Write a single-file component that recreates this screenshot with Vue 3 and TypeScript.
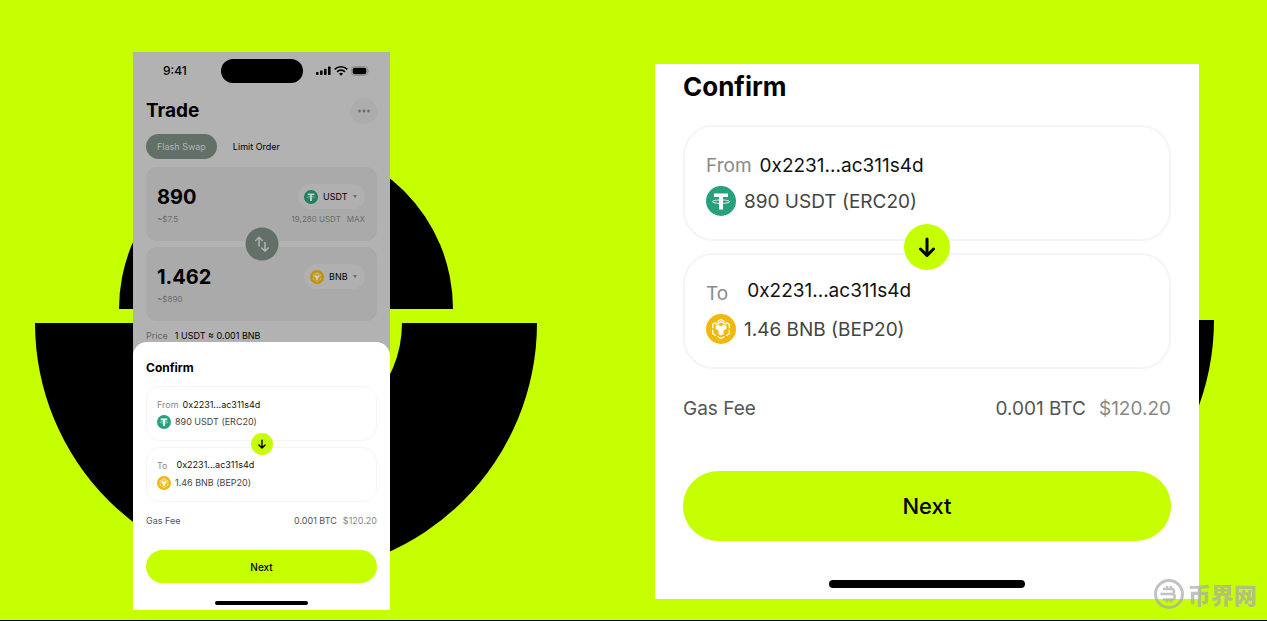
<script setup lang="ts">
import { ref } from 'vue'

interface Leg {
  label: string
  address: string
  token: 'usdt' | 'bnb'
  amount: string
}

const screens = ['phone', 'closeup'] as const

const legs: Leg[] = [
  { label: 'From', address: '0x2231...ac311s4d', token: 'usdt', amount: '890 USDT (ERC20)' },
  { label: 'To', address: '0x2231...ac311s4d', token: 'bnb', amount: '1.46 BNB (BEP20)' },
]

const tab = ref<'flash' | 'limit'>('flash')
const pay = ref('890')
const receive = ref('1.462')
</script>

<template>
  <main class="page">
    <svg class="symbols" aria-hidden="true">
      <defs>
        <symbol id="usdt" viewBox="0 0 30 30">
          <circle cx="15" cy="15" r="15" fill="#26a17b" />
          <path d="M8 7.500h14v3.500h-5v12.500h-4V11H8z" fill="#fff" />
          <path d="M13 14c-3.500.2-6.500.8-6.500 1.700s3.800 1.700 8.500 1.700 8.500-.8 8.500-1.700-3-1.500-6.500-1.700" fill="none" stroke="#fff" stroke-width=".9" />
        </symbol>
        <symbol id="bnb" viewBox="0 0 30 30">
          <circle cx="15" cy="15" r="15" fill="#f0b90b" />
          <g fill="none" stroke="#fff" stroke-width="1.300" stroke-linejoin="round">
            <path d="M11.500 7.500 15 5.500l3.500 2M20 8.300l3.300 1.900v4M23.300 15.800v4L20 21.700M18.500 22.500l-3.500 2-3.500-2M10 21.700l-3.300-1.900v-4M6.700 14.200v-4L10 8.300" />
            <path d="m9.500 10.300 5.500-2.500 5.500 2.500" />
          </g>
          <path d="m9.600 11.800 2.700-1.300L15 12.600l2.700-2.100 2.700 1.300v3l-2.900 2v3.400L15 21.600l-2.500-1.400v-3.400l-2.900-2z" fill="#fff" />
        </symbol>
      </defs>
    </svg>

    <section v-for="screen in screens" :key="screen" class="stage" :class="screen">
      <svg class="emblem" viewBox="0 0 502 432" aria-hidden="true">
        <path d="M84 167a167 167 0 0 1 334 0z" />
        <path d="M0 181a251 251 0 0 0 502 0H367a116 116 0 0 1-232 0z" />
      </svg>

      <div class="device">
        <div v-if="screen === 'phone'" class="trade">
          <div class="status">
            <span class="time">9:41</span>
            <span class="island"></span>
            <svg class="signals" viewBox="0 0 54 12" aria-hidden="true">
              <rect x="0" y="7" width="2.600" height="3" rx=".8" />
              <rect x="4" y="5.500" width="2.600" height="4.500" rx=".8" />
              <rect x="8" y="3.700" width="2.600" height="6.300" rx=".8" />
              <rect x="12" y="1.500" width="2.600" height="8.500" rx=".8" />
              <g fill="none" stroke="#000" stroke-width="1.700">
                <path d="M18.700 4.300a9 9 0 0 1 12.600 0" />
                <path d="M21.100 6.800a5.500 5.500 0 0 1 7.800 0" />
              </g>
              <path d="M23 8.700a3 3 0 0 1 4 0l-2 2z" />
              <rect x="35.500" y="1.500" width="16" height="9" rx="2.800" fill="none" stroke="#888" stroke-width=".8" />
              <rect x="36.700" y="2.700" width="13.600" height="6.600" rx="1.800" />
              <path d="M52.400 4.500c1.200.5 1.200 2.500 0 3z" fill="#888" />
            </svg>
          </div>

          <header class="heading">
            <h1>Trade</h1>
            <button type="button" class="more" aria-label="More">
              <svg viewBox="0 0 26 26" aria-hidden="true">
                <circle cx="8.500" cy="13" r="1.400" />
                <circle cx="13" cy="13" r="1.400" />
                <circle cx="17.500" cy="13" r="1.400" />
              </svg>
            </button>
          </header>

          <nav class="tabs">
            <button type="button" :class="{ active: tab === 'flash' }" @click="tab = 'flash'">Flash Swap</button>
            <button type="button" :class="{ active: tab === 'limit' }" @click="tab = 'limit'">Limit Order</button>
          </nav>

          <div class="swap">
            <div class="asset">
              <div class="line">
                <input v-model="pay" aria-label="Amount to pay" />
                <label class="chip">
                  <svg class="coin" aria-hidden="true"><use href="#usdt" /></svg>
                  <select aria-label="Token to pay"><option>USDT</option></select>
                  <i class="caret"></i>
                </label>
              </div>
              <div class="line sub">
                <span>~$7.5</span>
                <span class="balance"><span>19,280 USDT</span><span>MAX</span></span>
              </div>
            </div>
            <button type="button" class="flip" aria-label="Switch tokens">
              <svg viewBox="0 0 33 33" aria-hidden="true">
                <path d="M13.500 19v-9M9.800 13.500l3.700-3.700 3.700 3.700M19.500 14.500v9M15.800 20l3.700 3.700 3.700-3.700" />
              </svg>
            </button>
            <div class="asset">
              <div class="line">
                <input v-model="receive" aria-label="Amount to receive" />
                <label class="chip">
                  <svg class="coin" aria-hidden="true"><use href="#bnb" /></svg>
                  <select aria-label="Token to receive"><option>BNB</option></select>
                  <i class="caret"></i>
                </label>
              </div>
              <div class="line sub"><span>~$890</span></div>
            </div>
          </div>

          <p class="price"><span>Price</span><span class="rate">1 USDT ≈ 0.001 BNB</span></p>
        </div>

        <div class="sheet">
          <h2>Confirm</h2>
          <div class="legs">
            <div v-for="leg in legs" :key="leg.label" class="leg" :class="leg.token">
              <div class="row">
                <span class="label">{{ leg.label }}</span>
                <span class="address">{{ leg.address }}</span>
              </div>
              <div class="row amount">
                <svg class="coin" aria-hidden="true"><use :href="'#' + leg.token" /></svg>
                <span>{{ leg.amount }}</span>
              </div>
            </div>
            <span class="down">
              <svg viewBox="0 0 46 46" aria-hidden="true"><path d="M23 15v16M16.500 25l6.500 6.500 6.500-6.500" /></svg>
            </span>
          </div>
          <div class="gas">
            <span>Gas Fee</span>
            <span class="cost"><span>0.001 BTC</span><span class="fiat">$120.20</span></span>
          </div>
          <button type="button" class="next">Next</button>
          <span class="home"></span>
        </div>
      </div>
    </section>

    <div class="watermark">
      <svg viewBox="0 0 32 32" aria-hidden="true">
        <circle cx="16" cy="16" r="13.500" stroke-width="3" />
        <path d="M10 11h8.500a2.500 2.500 0 0 1 0 5H12M7.500 16H19a2.700 2.700 0 0 1 0 5.500h-9M14 8v3M18 8v3M14 21.500v3M18 21.500v3" stroke-width="2.500" />
      </svg>
      <span>币界网</span>
    </div>
  </main>
</template>

<style>
body {
  background: #c6ff00;
}
</style>

<style scoped>
.page {
  position: relative;
  box-sizing: border-box;
  min-height: 100vh;
  display: grid;
  grid-template-columns: minmax(0, 257fr) minmax(0, 544fr);
  column-gap: 265px;
  align-items: start;
  padding: 52px 68px 10px 133px;
  border-bottom: 1px solid #000;
  overflow: hidden;
  background: #c6ff00;
  color: #000;
  font-family: Inter, "Liberation Sans", sans-serif;
}

.page * {
  box-sizing: border-box;
}

.symbols {
  position: absolute;
  width: 0;
  height: 0;
}

.stage {
  position: relative;
}

.emblem {
  position: absolute;
  left: -98px;
  top: 90px;
  width: 502px;
  height: 432px;
}

.device {
  position: relative;
  background: #b2b2b2;
}

button,
input,
select {
  margin: 0;
  padding: 0;
  border: 0;
  background: none;
  color: inherit;
  font: inherit;
}

button {
  cursor: pointer;
}

h1,
h2,
p {
  margin: 0;
}

.trade {
  padding: 6px 13px 0;
  font-size: 9px;
  line-height: 12px;
}

.status {
  display: grid;
  grid-template-columns: 1fr 82px 1fr;
  align-items: center;
  height: 25px;
}

.time {
  padding-left: 17px;
  font-size: 12px;
  font-weight: 500;
}

.island {
  height: 24px;
  border-radius: 12px;
  background: #000;
}

.signals {
  justify-self: end;
  width: 54px;
  height: 12px;
  margin-right: 7px;
}

.heading {
  display: flex;
  align-items: center;
  justify-content: space-between;
  margin-top: 15px;
}

h1 {
  font-size: 19px;
  line-height: 26px;
  font-weight: 700;
}

.more {
  width: 26px;
  height: 26px;
  border-radius: 50%;
  background: #acacac;
  fill: #637067;
}

.more svg,
.flip svg,
.down svg {
  display: block;
  width: 100%;
  height: 100%;
}

.tabs {
  display: flex;
  gap: 5px;
  margin-top: 10px;
}

.tabs button {
  height: 25px;
  padding: 0 11px;
  border-radius: 13px;
  white-space: nowrap;
}

.tabs .active {
  background: #637067;
  color: #b2b2b2;
}

.swap {
  position: relative;
  display: grid;
  gap: 6px;
  margin-top: 8px;
}

.asset {
  height: 74px;
  padding: 17px 12px 0 11px;
  border-radius: 11px;
  background: #aaa;
}

.line {
  display: flex;
  align-items: center;
  justify-content: space-between;
}

.line input {
  flex: 1;
  width: 0;
  height: 25px;
  font-size: 20px;
  font-weight: 700;
}

.chip {
  display: flex;
  align-items: center;
  gap: 5px;
  height: 25px;
  padding: 0 8px 0 6px;
  border-radius: 13px;
  background: #b0b0b0;
}

.chip select {
  appearance: none;
}

.chip .coin {
  width: 14px;
  height: 14px;
  filter: brightness(0.8);
}

.caret {
  border: 2px solid transparent;
  border-top: 3px solid #637067;
  border-bottom: 0;
}

.sub {
  margin-top: 4px;
  color: #6c6c6c;
  font-size: 8px;
}

.balance {
  display: flex;
  gap: 6px;
}

.flip {
  position: absolute;
  left: 50%;
  top: 50%;
  width: 33px;
  height: 33px;
  transform: translate(-50%, -50%);
  border-radius: 50%;
  background: #637067;
}

.flip path {
  fill: none;
  stroke: #b2b2b2;
  stroke-width: 1.500;
}

.price {
  display: flex;
  gap: 7px;
  margin-top: 9px;
  color: #666;
}

.rate {
  color: #000;
}

.sheet {
  display: flex;
  flex-direction: column;
  padding: 17px 13px 5px;
  border-radius: 14px 14px 0 0;
  background: #fff;
  font-size: 9px;
}

h2 {
  font-size: 12px;
  line-height: 18px;
  font-weight: 700;
}

.legs {
  position: relative;
  display: grid;
  gap: 6px;
  margin-top: 9px;
}

.leg {
  padding: 9px 10px 10px;
  border: 1px solid #f5f5f5;
  border-radius: 14px;
}

.row {
  display: flex;
  align-items: center;
  gap: 4px;
  height: 17px;
  white-space: nowrap;
}

.label {
  color: #8a8a8a;
}

.address {
  color: #111;
}

.leg.bnb .address {
  padding: 0 0 2px 5px;
}

.amount {
  color: #444;
}

.row .coin {
  width: 14px;
  height: 14px;
}

.down {
  position: absolute;
  left: 50%;
  top: 50%;
  width: 22px;
  height: 22px;
  transform: translate(-50%, -50%);
  border-radius: 50%;
  background: #c6ff00;
}

.down path {
  fill: none;
  stroke: #000;
  stroke-width: 3;
  stroke-linecap: round;
  stroke-linejoin: round;
}

.gas,
.cost {
  display: flex;
  justify-content: space-between;
  gap: 6px;
  color: #555;
}

.gas {
  margin-top: 12px;
  line-height: 14px;
}

.cost .fiat {
  color: #888;
}

.next {
  height: 33px;
  margin-top: 22px;
  border-radius: 17px;
  background: #c6ff00;
  font-size: 10px;
  font-weight: 500;
}

.home {
  align-self: center;
  width: 40%;
  height: 4px;
  margin-top: 18px;
  border-radius: 4px;
  background: #000;
}

.closeup {
  margin-top: 12px;
}

.closeup .emblem {
  left: 57px;
  top: 75px;
}

.closeup .sheet {
  padding: 7px 28px 11px;
  border-radius: 0;
  font-size: 19px;
}

.closeup h2 {
  font-size: 26px;
  line-height: 32px;
}

.closeup .legs {
  gap: 12px;
  margin-top: 22px;
}

.closeup .leg {
  padding: 20px 21px;
  border-width: 2px;
  border-radius: 30px;
}

.closeup .row {
  gap: 8px;
  height: 36px;
}

.closeup .leg.bnb .address {
  padding: 0 0 6px 11px;
}

.closeup .row .coin {
  width: 30px;
  height: 30px;
}

.closeup .down {
  width: 46px;
  height: 46px;
}

.closeup .gas {
  margin-top: 26px;
  line-height: 28px;
}

.closeup .cost {
  gap: 13px;
}

.closeup .next {
  height: 70px;
  margin-top: 48px;
  border-radius: 35px;
  font-size: 22px;
}

.closeup .home {
  width: 40%;
  height: 8px;
  margin-top: 39px;
}

.watermark {
  position: absolute;
  right: 10px;
  bottom: 10px;
  display: flex;
  align-items: center;
  gap: 3px;
  opacity: 0.7;
  color: #a9a9a9;
  font-family: "Noto Sans CJK SC", sans-serif;
  font-size: 23px;
  line-height: 28px;
  font-weight: 900;
}

.watermark svg {
  width: 32px;
  height: 32px;
  fill: none;
  stroke: #a9a9a9;
}
</style>
